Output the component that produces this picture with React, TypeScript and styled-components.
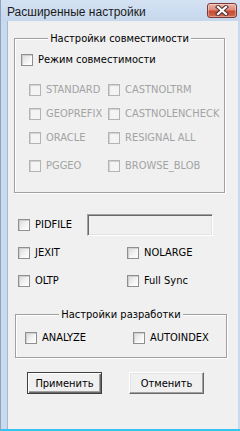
import React from 'react';
import styled, { createGlobalStyle, css } from 'styled-components';

const Global = createGlobalStyle`
  html, body { margin: 0; padding: 0; background: #fff; }
  body { width: 240px; height: 431px; overflow: hidden; }
`;

const UI_FONT = `"DejaVu Sans Condensed", "Liberation Sans", sans-serif`;

const Window = styled.div`
  box-sizing: border-box;
  width: 240px;
  height: 431px;
  display: flex;
  flex-direction: column;
  background: #c9d9ee;
  border-left: 1px solid #8ea3bf;
  font-family: ${UI_FONT};
  font-size: 11px;
  color: #000;
`;

const TitleBar = styled.div`
  height: 21px;
  flex: none;
  display: flex;
  align-items: center;
  justify-content: space-between;
  padding: 0 3px 0 6px;
  background: linear-gradient(#d4e2f3, #c6d7ed);
`;

const Title = styled.div`
  font-family: "Liberation Sans", Arial, sans-serif;
  font-size: 12px;
  line-height: 14px;
  padding-top: 2px;
  color: #1b1b1b;
  white-space: nowrap;
`;

const CloseButton = styled.div`
  box-sizing: border-box;
  width: 30px;
  height: 15px;
  border: 1px solid #7a3a33;
  border-radius: 3px;
  background: linear-gradient(#ecb4a8 0%, #de8b7b 45%, #c8492f 55%, #d46a55 100%);
  box-shadow: inset 0 0 0 1px rgba(255, 255, 255, 0.35);
  display: flex;
  align-items: center;
  justify-content: center;
`;

const Body = styled.div`
  flex: 1;
  display: flex;
  padding: 0 2px 0 6px;
`;

const Client = styled.div`
  flex: 1;
  background: #f0f0f0;
  border-left: 1px solid #a6b8ce;
  display: flex;
  flex-direction: column;
  align-items: flex-start;
`;

const BottomBand = styled.div`
  height: 2px;
  flex: none;
  background: #35c3ef;
`;

const GroupBox = styled.div<{ $top: number; $left: number; $width: number; $height: number }>`
  box-sizing: border-box;
  margin: ${(p) => p.$top}px 0 0 ${(p) => p.$left}px;
  width: ${(p) => p.$width}px;
  height: ${(p) => p.$height}px;
  border: 1px solid #a0a0a0;
  box-shadow: 1px 1px 0 #fff, inset 1px 1px 0 #fff;
  display: flex;
  flex-direction: column;
  align-items: flex-start;
`;

const Legend = styled.div`
  align-self: center;
  margin-top: -7px;
  height: 13px;
  line-height: 13px;
  padding: 0 2px;
  background: #f0f0f0;
  white-space: nowrap;
`;

const CheckLabel = styled.label<{ $disabled?: boolean; $width?: number; $ml?: number; $mt?: number }>`
  display: flex;
  align-items: center;
  gap: 5px;
  height: 12px;
  line-height: 12px;
  white-space: nowrap;
  color: ${(p) => (p.$disabled ? '#a3a3a3' : '#000')};
  ${(p) => (p.$width ? `width: ${p.$width}px; flex: none;` : '')}
  ${(p) => (p.$ml !== undefined || p.$mt !== undefined ? `margin: ${p.$mt ?? 0}px 0 0 ${p.$ml ?? 0}px;` : '')}
`;

const Box = styled.span<{ $disabled?: boolean }>`
  box-sizing: border-box;
  width: 12px;
  height: 12px;
  flex: none;
  ${(p) =>
    p.$disabled
      ? css`
          border: 1px solid #b4b4b4;
          background: #f4f4f4;
          box-shadow: inset 1px 1px 0 #d2d2d2;
        `
      : css`
          border: 1px solid #8e8f8f;
          background: linear-gradient(135deg, #d9d9d9 0%, #f3f3f3 55%, #ffffff 100%);
          box-shadow: inset 1px 1px 0 #cfcfcf, inset -1px -1px 0 #fbfbfb;
        `}
`;

const OptionGrid = styled.div<{ $mt: number; $ml: number; $cols: string; $rows?: string; $gap?: number }>`
  display: grid;
  margin: ${(p) => p.$mt}px 0 0 ${(p) => p.$ml}px;
  grid-template-columns: ${(p) => p.$cols};
  ${(p) => (p.$rows ? `grid-template-rows: ${p.$rows};` : 'grid-auto-rows: 12px;')}
  row-gap: ${(p) => p.$gap ?? 0}px;
  align-items: start;
`;

const PidRow = styled.div`
  display: flex;
  align-items: center;
  height: 22px;
  margin: 21px 0 0 10px;
`;

const TextField = styled.input`
  box-sizing: border-box;
  width: 126px;
  height: 22px;
  margin: 0;
  padding: 0 3px;
  font: 11px ${UI_FONT};
  background: #f0f0f0;
  border: 1px solid;
  border-color: #a0a0a0 #fff #fff #a0a0a0;
  box-shadow: inset 1px 1px 0 #696969, inset -1px -1px 0 #e3e3e3;
  outline: none;
`;

const ButtonRow = styled.div`
  display: flex;
  gap: 27px;
  margin: 14px 0 0 19px;
`;

const Button = styled.button<{ $default?: boolean }>`
  box-sizing: border-box;
  width: 75px;
  height: 22px;
  margin: 0;
  padding: 0;
  font: 11px ${UI_FONT};
  color: #000;
  background: #f0f0f0;
  ${(p) =>
    p.$default
      ? css`
          border: 1px solid #3f3f3f;
          box-shadow: inset 1px 1px 0 #fff, inset -1px -1px 0 #696969, inset -2px -2px 0 #a0a0a0;
        `
      : css`
          border: 1px solid;
          border-color: #fff #696969 #696969 #fff;
          box-shadow: inset -1px -1px 0 #a0a0a0, inset 1px 1px 0 #e3e3e3;
        `}
`;

type Opt = { label: string; disabled?: boolean };

const Check: React.FC<Opt & { width?: number; ml?: number; mt?: number }> = ({ label, disabled, width, ml, mt }) => (
  <CheckLabel $disabled={disabled} $width={width} $ml={ml} $mt={mt}>
    <Box $disabled={disabled} />
    <span>{label}</span>
  </CheckLabel>
);

const compat: Opt[] = [
  { label: 'STANDARD', disabled: true },
  { label: 'CASTNOLTRM', disabled: true },
  { label: 'GEOPREFIX', disabled: true },
  { label: 'CASTNOLENCHECK', disabled: true },
  { label: 'ORACLE', disabled: true },
  { label: 'RESIGNAL ALL', disabled: true },
  { label: 'PGGEO', disabled: true },
  { label: 'BROWSE_BLOB', disabled: true },
];

const flags: Opt[] = [
  { label: 'JEXIT' },
  { label: 'NOLARGE' },
  { label: 'OLTP' },
  { label: 'Full Sync' },
];

const dev: Opt[] = [{ label: 'ANALYZE' }, { label: 'AUTOINDEX' }];

export default function App() {
  return (
    <>
      <Global />
      <Window>
        <TitleBar>
          <Title>Расширенные настройки</Title>
          <CloseButton>
            <svg width="14" height="11" viewBox="0 0 14 11">
              <path d="M3 2 L11 9 M11 2 L3 9" stroke="#4b3434" strokeWidth="4.2" strokeLinecap="square" fill="none" />
              <path d="M3 2 L11 9 M11 2 L3 9" stroke="#ffffff" strokeWidth="2.2" strokeLinecap="square" fill="none" />
            </svg>
          </CloseButton>
        </TitleBar>
        <Body>
          <Client>
            <GroupBox $top={17} $left={6} $width={211} $height={155}>
              <Legend>Настройки совместимости</Legend>
              <Check label="Режим совместимости" ml={6} mt={9} />
              <OptionGrid $mt={18} $ml={14} $cols="79px auto" $rows="24px 24px 28px 12px">
                {compat.map((o) => (
                  <Check key={o.label} {...o} />
                ))}
              </OptionGrid>
            </GroupBox>
            <PidRow>
              <Check label="PIDFILE" width={69} />
              <TextField readOnly defaultValue="" />
            </PidRow>
            <OptionGrid $mt={11} $ml={10} $cols="109px auto" $gap={16}>
              {flags.map((o) => (
                <Check key={o.label} {...o} />
              ))}
            </OptionGrid>
            <GroupBox $top={27} $left={7} $width={212} $height={44}>
              <Legend>Настройки разработки</Legend>
              <OptionGrid $mt={11} $ml={9} $cols="108px auto">
                {dev.map((o) => (
                  <Check key={o.label} {...o} />
                ))}
              </OptionGrid>
            </GroupBox>
            <ButtonRow>
              <Button $default>Применить</Button>
              <Button>Отменить</Button>
            </ButtonRow>
          </Client>
        </Body>
        <BottomBand />
      </Window>
    </>
  );
}
